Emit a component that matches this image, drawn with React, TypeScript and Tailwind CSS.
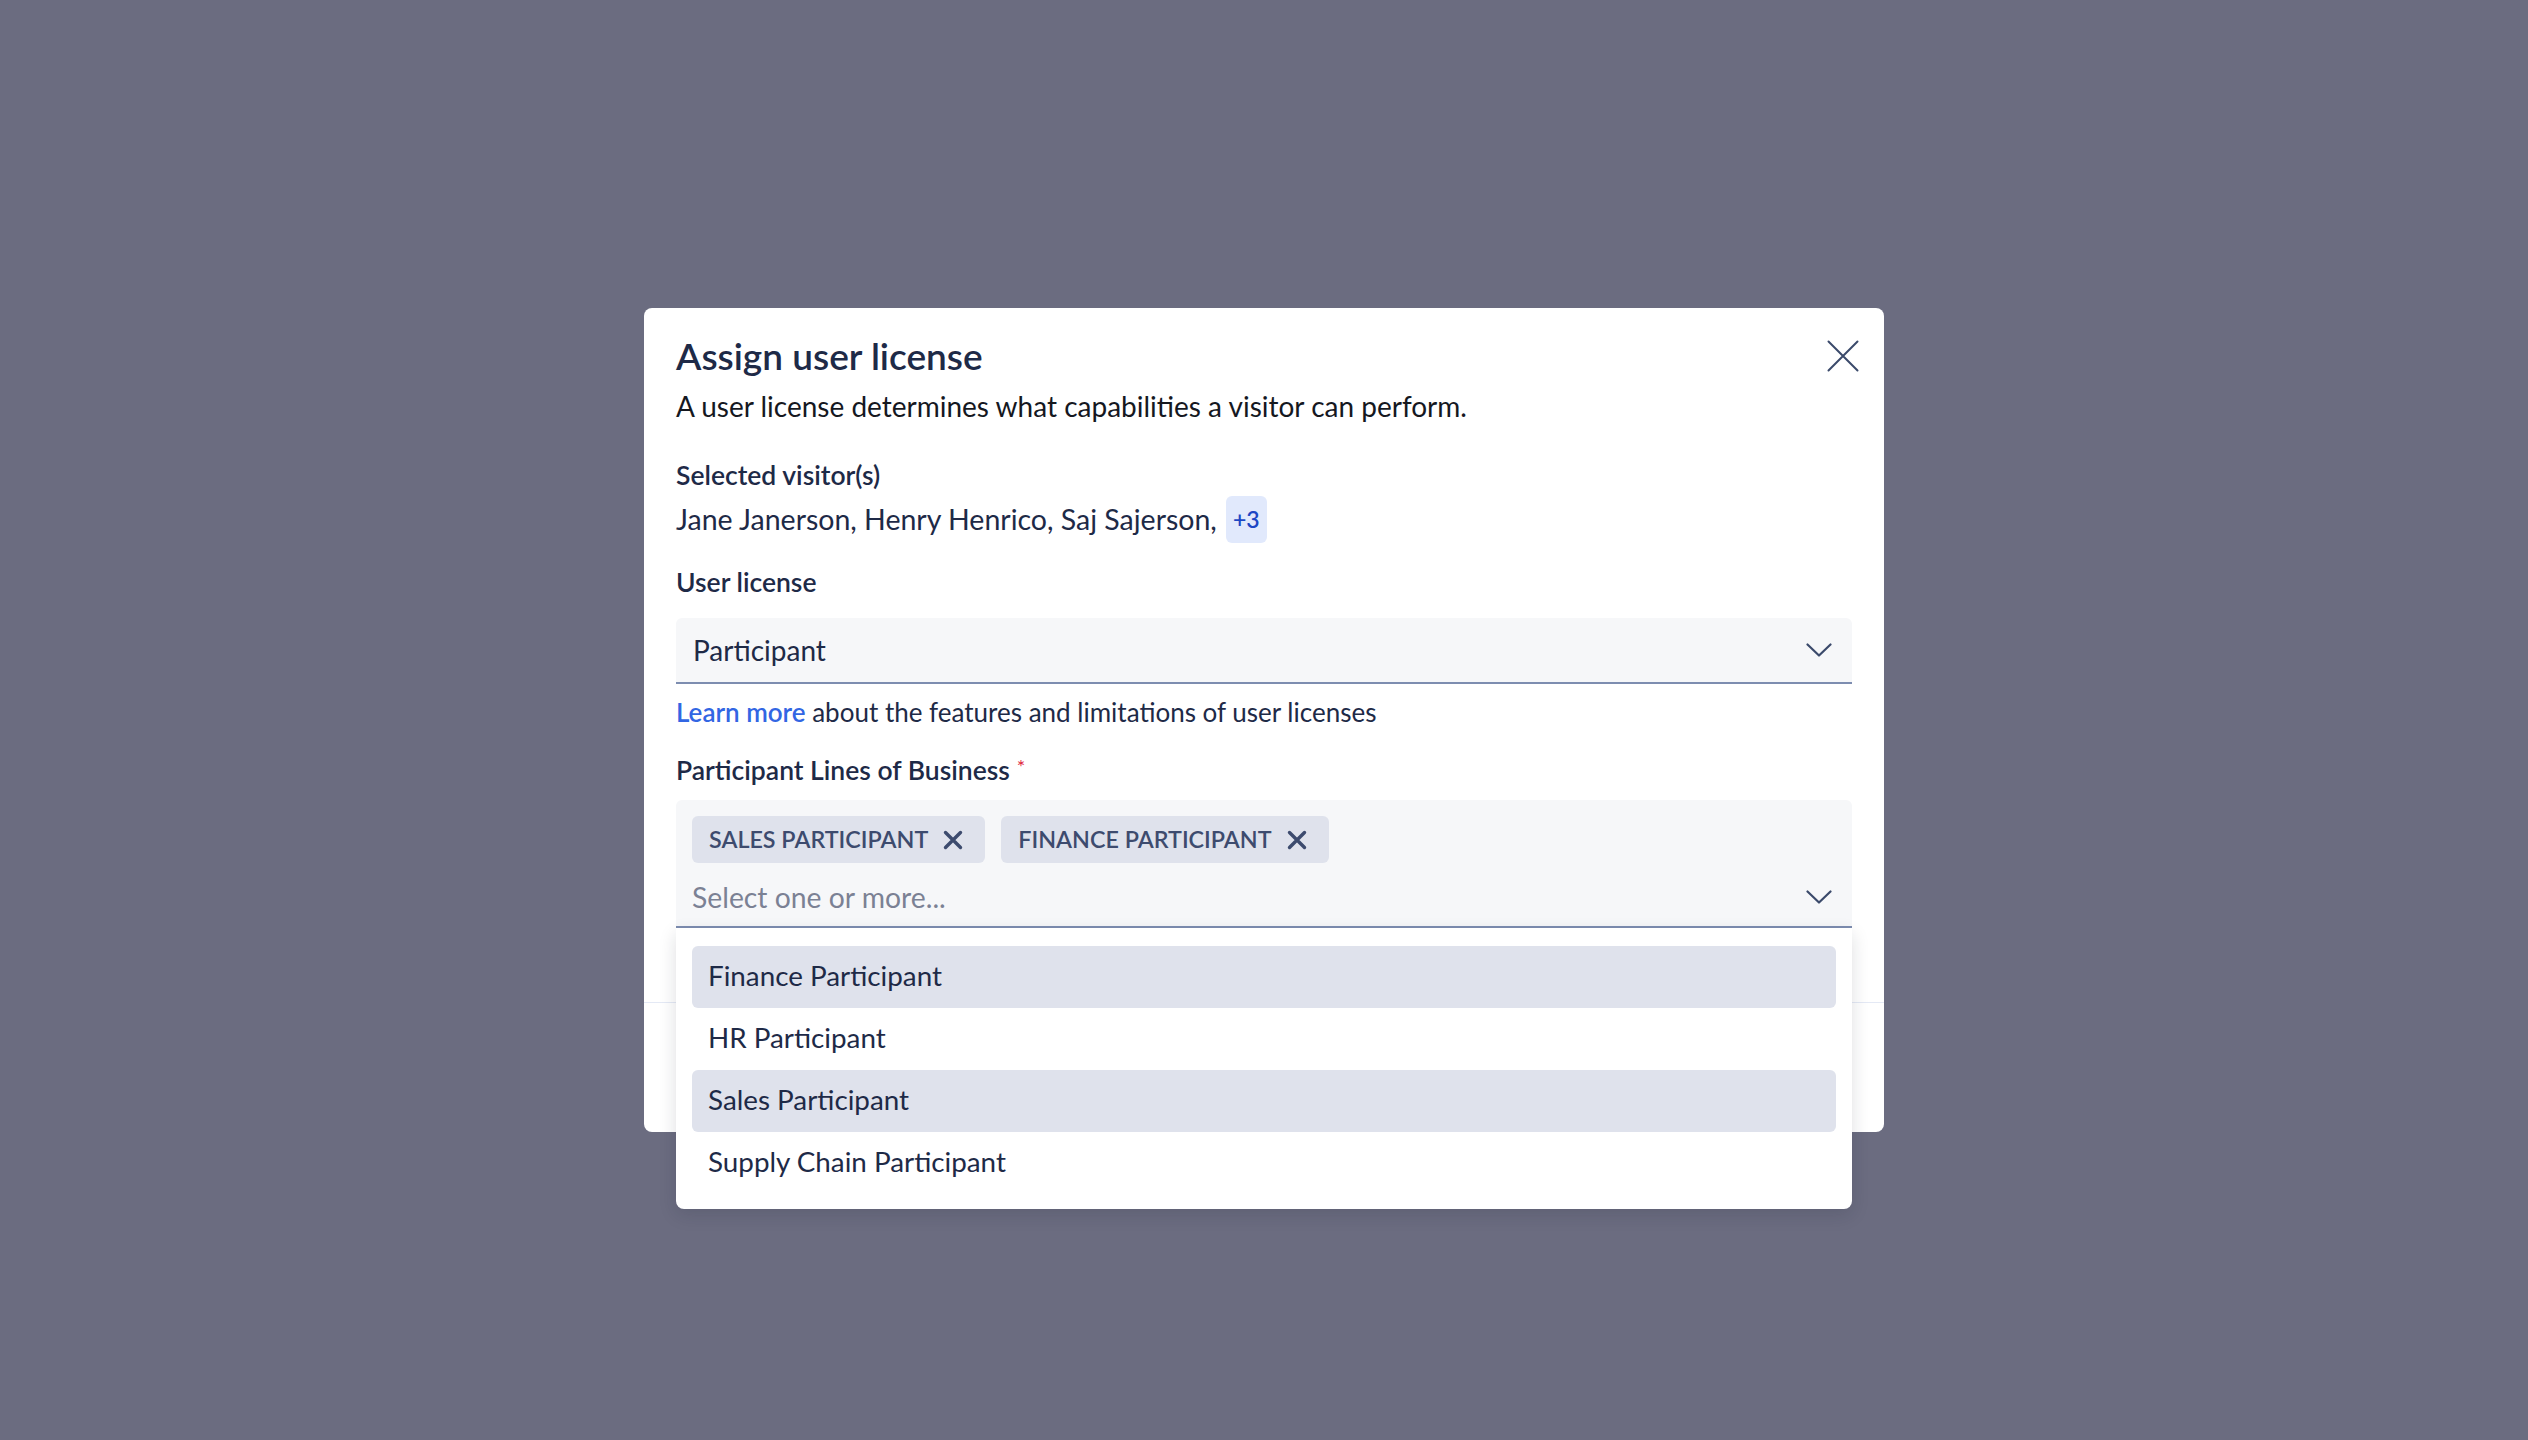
import React from "react";

const options = [
  { label: "Finance Participant", selected: true },
  { label: "HR Participant", selected: false },
  { label: "Sales Participant", selected: true },
  { label: "Supply Chain Participant", selected: false },
];

const tags = ["Sales Participant", "Finance Participant"];

function Chevron() {
  return (
    <svg width="26" height="15" viewBox="0 0 26 15" fill="none" className="shrink-0">
      <polyline points="1.5,1.5 13,12.5 24.5,1.5" stroke="#3b4a6b" strokeWidth="2.2" strokeLinecap="round" strokeLinejoin="round" />
    </svg>
  );
}

function TagX() {
  return (
    <svg width="20" height="20" viewBox="0 0 20 20" fill="none" className="shrink-0">
      <path d="M2.5 2.5 17.5 17.5 M17.5 2.5 2.5 17.5" stroke="#3d4b6e" strokeWidth="3.4" strokeLinecap="round" />
    </svg>
  );
}

export default function App() {
  return (
    <div className="flex h-screen w-full items-center justify-center bg-[#6b6c80] font-['Lato',sans-serif]">
      <div className="relative w-[1240px] rounded-lg bg-white">
        <button className="absolute right-[25px] top-[32px]" aria-label="Close">
          <svg width="32" height="32" viewBox="0 0 32 32" fill="none">
            <path d="M1.5 1.5 30.5 30.5 M30.5 1.5 1.5 30.5" stroke="#3b4a6b" strokeWidth="2" strokeLinecap="round" />
          </svg>
        </button>

        <div className="px-8 pt-[26px] pb-[74px]">
          <h2 className="text-[37px] font-semibold leading-[44px] text-[#1e2a47]">Assign user license</h2>
          <p className="mt-[10px] text-[28px] leading-[36px] text-[#15181f]">
            A user license determines what capabilities a visitor can perform.
          </p>

          <div className="mt-[33px] text-[26.5px] font-semibold leading-[36px] text-[#1e2a47]">Selected visitor(s)</div>
          <div className="mt-[3px] flex h-[47px] items-center gap-[9px] text-[28.5px] text-[#1e2a47]">
            <span>Jane Janerson, Henry Henrico, Saj Sajerson,</span>
            <span className="flex h-[47px] w-[41px] items-center justify-center rounded-md bg-[#e1e9fc] text-[23px] font-semibold text-[#1d47c4]">
              +3
            </span>
          </div>

          <div className="mt-[21px] text-[26.5px] font-semibold leading-[36px] text-[#1e2a47]">User license</div>
          <div className="mt-[18px] flex h-[66px] items-center justify-between rounded-t-md border-b-2 border-[#7d8db0] bg-[#f6f7f9] pl-[17px] pr-[20px] text-[28px] text-[#1e2a47]">
            <span>Participant</span>
            <Chevron />
          </div>

          <p className="mt-[10px] text-[26px] leading-[36px] text-[#1e2a47]">
            <span className="font-semibold text-[#3266e3]">Learn more</span> about the features and limitations of user licenses
          </p>

          <div className="mt-[22px] flex items-start gap-[7px] text-[26.5px] font-semibold leading-[36px] text-[#1e2a47]">
            <span>Participant Lines of Business</span>
            <span className="text-[20px] font-normal leading-[28px] text-[#e0283c]">*</span>
          </div>

          <div className="relative mt-[12px]">
            <div className="rounded-t-md border-b-2 border-[#7d8db0] bg-[#f6f7f9] pl-4 pr-[20px] pt-4 pb-[11px]">
              <div className="flex h-[47px] gap-4">
                {tags.map((t) => (
                  <span
                    key={t}
                    className="flex h-[47px] items-center gap-[15px] rounded-md bg-[#dfe2ec] pl-[17px] pr-[22px] text-[23.3px] font-semibold uppercase text-[#3d4b6e]"
                  >
                    {t}
                    <TagX />
                  </span>
                ))}
              </div>
              <div className="mt-4 flex h-[36px] items-center justify-between">
                <span className="text-[28.3px] text-[#7b8194]">Select one or more...</span>
                <Chevron />
              </div>
            </div>

            <ul className="absolute left-0 right-0 top-full z-10 rounded-b-lg bg-white px-4 pt-[18px] pb-[15px] shadow-[0_6px_18px_rgba(20,25,45,0.14)]">
              {options.map((o) => (
                <li
                  key={o.label}
                  className={`flex h-[62px] items-center rounded-md px-4 pb-[3px] text-[27.8px] text-[#1e2a47] ${
                    o.selected ? "bg-[#dfe2ec]" : ""
                  }`}
                >
                  {o.label}
                </li>
              ))}
            </ul>
          </div>
        </div>

        <div className="flex h-[130px] items-center justify-end gap-4 border-t border-[#e4e9f5] px-8">
          <button className="h-[56px] rounded-md border border-[#c5cbd8] px-6 text-[24px] text-[#1e2a47]">Cancel</button>
          <button className="h-[56px] rounded-md bg-[#3266e3] px-6 text-[24px] font-semibold text-white">Assign</button>
        </div>
      </div>
    </div>
  );
}
